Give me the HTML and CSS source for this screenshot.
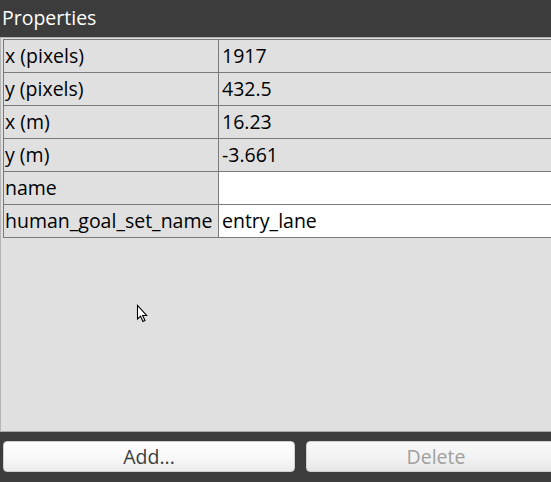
FILE: index.html
```html
<!DOCTYPE html>
<html>
<head>
<meta charset="utf-8">
<link rel="stylesheet" href="styles.css">
</head>
<body>
<div class="window">
  <div class="title">Properties</div>
  <div class="panel">
    <table class="props">
      <tr><td class="key">x (pixels)</td><td class="val">1917</td></tr>
      <tr><td class="key">y (pixels)</td><td class="val">432.5</td></tr>
      <tr><td class="key">x (m)</td><td class="val">16.23</td></tr>
      <tr><td class="key">y (m)</td><td class="val">-3.661</td></tr>
      <tr><td class="key">name</td><td class="val edit"></td></tr>
      <tr><td class="key">human_goal_set_name</td><td class="val edit">entry_lane</td></tr>
    </table>
    <svg class="cursor" width="14" height="20" viewBox="0 0 14 20">
      <path d="M1.5 1.5 L1.5 15 L4.5 12.2 L7 17.5 L9 16.6 L6.6 11.5 L10.6 11.5 Z" fill="#fff" stroke="#000" stroke-width="1.1" stroke-linejoin="miter"/>
    </svg>
  </div>
  <div class="buttons">
    <button class="btn">Add...</button>
    <button class="btn disabled">Delete</button>
  </div>
</div>
</body>
</html>
```
FILE: styles.css
```css
html, body {
  margin: 0;
  padding: 0;
  background: #3c3c3c;
  overflow: hidden;
}
.window {
  width: 551px;
  height: 482px;
  display: flex;
  flex-direction: column;
  font-family: "Open Sans", "Noto Sans", sans-serif;
}
.title {
  height: 37px;
  box-sizing: border-box;
  padding: 5px 0 0 2px;
  color: #ffffff;
  font-size: 19.5px;
  line-height: 26px;
}
.panel {
  position: relative;
  height: 395px;
  box-sizing: border-box;
  background: #e0e0e0;
  border-left: 1px solid #b4b4b4;
  border-top: 1px solid #b4b4b4;
  border-bottom: 1px solid #a8a8a8;
  padding: 1px 0 0 2px;
}
.props {
  border-collapse: collapse;
  width: 560px;
  font-size: 19.5px;
  color: #000;
}
.props td {
  height: 32px;
  padding: 0 0 0 2px;
  border: 1px solid #7a7a7a;
  line-height: 32px;
  white-space: nowrap;
}
.props td.key {
  width: 213px;
  padding-left: 1px;
}
.props td.val {
  padding-left: 3px;
}
.props td.edit {
  background: #ffffff;
}
.cursor {
  position: absolute;
  left: 135px;
  top: 266px;
}
.buttons {
  display: flex;
  gap: 11px;
  padding: 9px 0 0 3px;
}
.btn {
  flex: 0 0 292px;
  height: 31px;
  border: 1px solid #cfcfcf;
  border-radius: 4px;
  background: linear-gradient(#ffffff, #f7f7f7 60%, #ececec);
  font-family: inherit;
  font-size: 19.5px;
  color: #3c3c3c;
  padding: 0;
}
.btn.disabled {
  flex: 0 0 260px;
  color: #a0a0a0;
  background: linear-gradient(#f8f8f8, #f1f1f1 60%, #e6e6e6);
}
```
